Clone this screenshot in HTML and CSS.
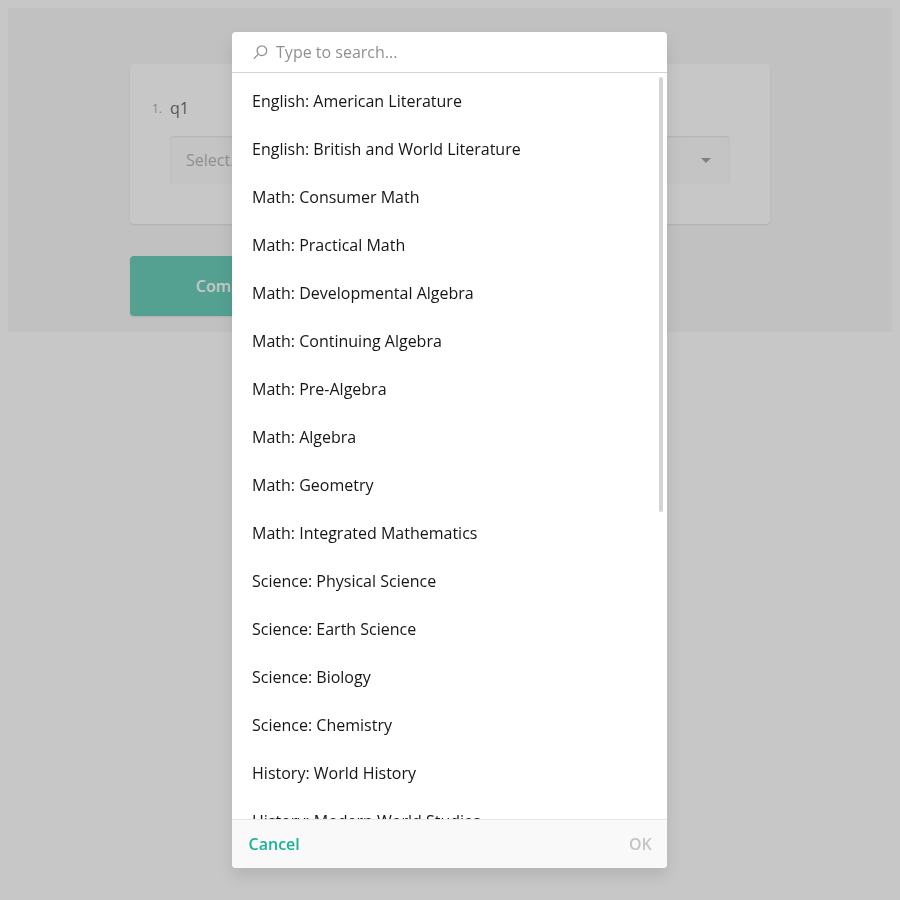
FILE: index.html
```html
<!DOCTYPE html>
<html lang="en">
<head>
<meta charset="utf-8">
<title>Survey</title>
<link rel="stylesheet" href="styles.css">
</head>
<body>
<main class="survey">
  <section class="page">
    <div class="question">
      <div class="question-title"><span class="number">1.</span><span>q1</span></div>
      <div class="dropdown"><span>Select...</span>
        <svg width="10" height="5" viewBox="0 0 10 5"><path d="M0 0h10L5 5z" fill="#707070"/></svg>
      </div>
    </div>
  </section>
  <button class="complete">Complete</button>
</main>
<div class="overlay">
  <div class="popup">
    <div class="search">
      <svg width="16" height="16" viewBox="0 0 16 16" fill="none" stroke="#909090" stroke-width="1.3"><circle cx="9.9" cy="6.7" r="4.8"/><path d="M6.4 10.1L1.9 14.6"/></svg>
      <span>Type to search...</span>
    </div>
    <div class="body">
      <ul class="list">
        <li>English: American Literature</li>
        <li>English: British and World Literature</li>
        <li>Math: Consumer Math</li>
        <li>Math: Practical Math</li>
        <li>Math: Developmental Algebra</li>
        <li>Math: Continuing Algebra</li>
        <li>Math: Pre-Algebra</li>
        <li>Math: Algebra</li>
        <li>Math: Geometry</li>
        <li>Math: Integrated Mathematics</li>
        <li>Science: Physical Science</li>
        <li>Science: Earth Science</li>
        <li>Science: Biology</li>
        <li>Science: Chemistry</li>
        <li>History: World History</li>
        <li>History: Modern World Studies</li>
      </ul>
      <div class="thumb"></div>
    </div>
    <div class="footer"><span class="cancel">Cancel</span><span class="ok">OK</span></div>
  </div>
</div>
</body>
</html>
```
FILE: styles.css
```css
* { box-sizing: border-box; }
html { background: #fff; }
body { margin: 8px; height: 884px; overflow: hidden; font: 16px/24px "Open Sans", sans-serif; color: #161616; }
.survey { height: 324px; padding: 56px 122px 16px; background: #f3f3f3; }
.page { height: 160px; padding: 32px 40px 40px; background: #fff; border-radius: 4px; box-shadow: 0 1px 2px rgba(0,0,0,.15); }
.question-title { position: relative; height: 24px; color: #161616; font-weight: 500; }
.number { position: absolute; left: -18px; top: 1px; font-size: 12px; font-weight: 500; color: #808080; }
.dropdown { margin-top: 16px; height: 48px; padding: 0 19px 0 16px; display: flex; align-items: center; justify-content: space-between; border-radius: 4px; background: #f9f9f9; color: #909090; box-shadow: inset 0 1px 2px rgba(0,0,0,.15); }
.complete { display: block; margin-top: 32px; width: 206px; height: 60px; border: 0; border-radius: 4px; background: #19b394; color: #fff; font: 600 16px/24px "Open Sans", sans-serif; box-shadow: 0 1px 2px rgba(0,0,0,.15); }
.overlay { position: fixed; inset: 0; display: flex; align-items: center; justify-content: center; padding-right: .5px; background: rgba(144,144,144,.5); }
.popup { width: 435.4px; height: 836px; display: flex; flex-direction: column; overflow: hidden; background: #fff; border-radius: 4px; box-shadow: 0 8px 16px rgba(0,0,0,.1); }
.search { height: 41px; flex: none; display: flex; align-items: center; gap: 8px; padding: 0 20px; color: #909090; border-bottom: 1px solid #d4d4d4; }
.body { position: relative; flex: 1; min-height: 0; overflow: hidden; }
.list { margin: 0; padding: 4px 0; list-style: none; }
.list li { height: 48px; padding: 12px 20px; }
.thumb { position: absolute; top: 4px; right: 4px; width: 4px; height: 435px; border-radius: 2px; background: #d4d4d4; }
.footer { height: 49px; flex: none; display: flex; justify-content: space-between; padding: 12px 15.7px 12px 16.5px; background: #f9f9f9; border-top: 1px solid #e7e7e7; font-weight: 600; }
.cancel { color: #19b394; }
.ok { color: #c4c4c4; }
```
